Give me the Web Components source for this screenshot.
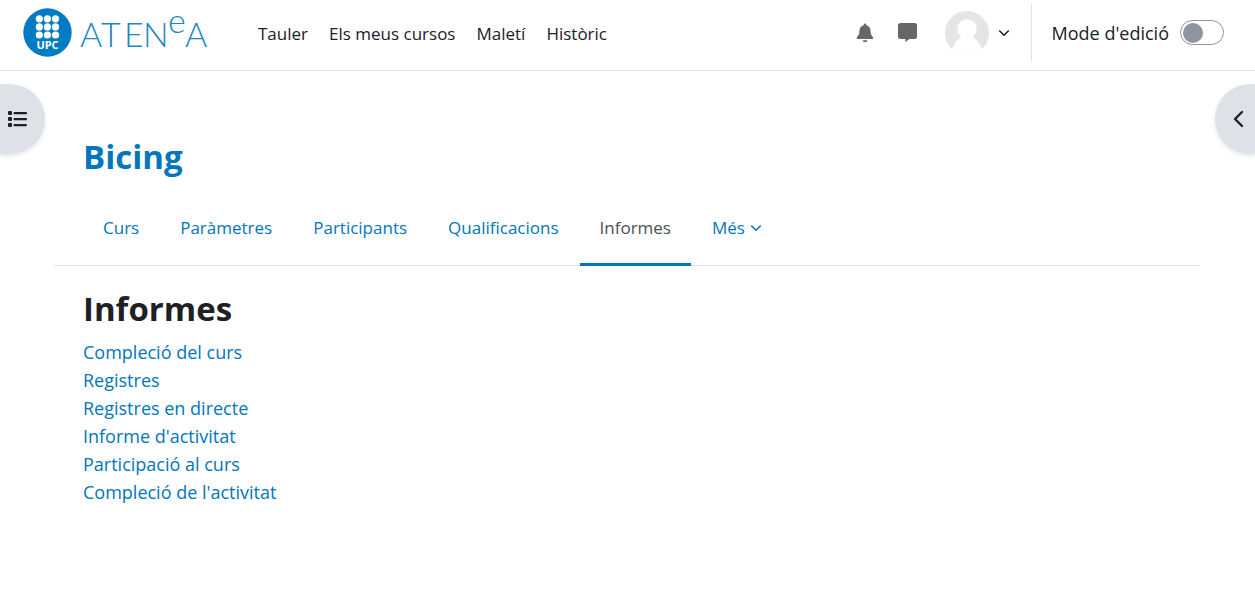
<!DOCTYPE html>
<html lang="ca">
<head>
<meta charset="utf-8">
<meta name="viewport" content="width=device-width, initial-scale=1">
<title>Bicing: Informes</title>
<style>
body { margin: 0; background: #fff; color: #1d2125; font: 18px/28px "Open Sans", "Noto Sans", sans-serif; --link: #0076bd; --line: #dee2e6; --nav-size: 17px; --title-size: 33px; }
</style>
</head>
<body>
<site-header>
  <site-logo slot="brand"></site-logo>
  <nav-link href="#tauler">Tauler</nav-link>
  <nav-link href="#cursos">Els meus cursos</nav-link>
  <nav-link href="#maleti">Maletí</nav-link>
  <nav-link href="#historic">Històric</nav-link>
  <user-tools slot="tools"></user-tools>
  <edit-switch slot="tools">Mode d'edició</edit-switch>
</site-header>
<drawer-toggle side="left" label="Obre l'índex del curs"></drawer-toggle>
<drawer-toggle side="right" label="Obre el calaix de blocs"></drawer-toggle>
<course-page heading="Bicing">
  <course-tab slot="tabs" href="#curs">Curs</course-tab>
  <course-tab slot="tabs" href="#parametres">Paràmetres</course-tab>
  <course-tab slot="tabs" href="#participants">Participants</course-tab>
  <course-tab slot="tabs" href="#qualificacions">Qualificacions</course-tab>
  <course-tab slot="tabs" href="#informes" active>Informes</course-tab>
  <course-tab slot="tabs" href="#mes" menu>Més</course-tab>
  <report-list heading="Informes">
    <report-link href="#complecio">Compleció del curs</report-link>
    <report-link href="#registres">Registres</report-link>
    <report-link href="#directe">Registres en directe</report-link>
    <report-link href="#activitat">Informe d'activitat</report-link>
    <report-link href="#participacio">Participació al curs</report-link>
    <report-link href="#complecio-activitat">Compleció de l'activitat</report-link>
  </report-list>
</course-page>
<script>
const define = (name, render) => customElements.define(name, class extends HTMLElement {
  constructor() {
    super();
    const t = document.createElement('template');
    t.innerHTML = render(this);
    this.attachShadow({ mode: 'open' }).append(t.content.cloneNode(true));
  }
});
const attr = (el, name) => el.getAttribute(name) || '';
const chevron = '<svg width="12" height="12" viewBox="0 0 12 12" aria-hidden="true"><path d="M1.7 4 6 8.2 10.3 4" fill="none" stroke="currentColor" stroke-width="1.6" stroke-linecap="round" stroke-linejoin="round"/></svg>';

define('site-header', () => `
<style>
  :host { display: block; border-bottom: 1px solid var(--line); background: #fff; }
  header { display: flex; align-items: center; height: 70px; padding: 0 31px 0 23px; box-sizing: border-box; }
  nav { display: flex; gap: 21px; margin: 0 auto 3px 51px; font-size: var(--nav-size); }
  .tools { display: flex; align-items: center; height: 70px; }
</style>
<header><slot name="brand"></slot><nav aria-label="Navegació del lloc"><slot></slot></nav><div class="tools"><slot name="tools"></slot></div></header>`);

define('site-logo', () => {
  let dots = '';
  for (const y of [10.8, 18.9, 27]) for (const x of [16.3, 24.4, 32.5]) dots += `<circle cx="${x}" cy="${y}" r="3.6"/>`;
  return `
<style>
  :host { display: block; margin-bottom: 6px; }
  a { display: flex; align-items: center; width: 184px; height: 49px; color: #1b87c9; text-decoration: none; }
  svg { display: block; overflow: visible; }
</style>
<a href="#inici" aria-label="Atenea UPC"><svg width="184" height="49" viewBox="0 0 184 49">
  <circle cx="24.5" cy="24.5" r="24.2" fill="#007bc4"/>
  <g fill="#fff">${dots}</g>
  <text x="24.5" y="41" text-anchor="middle" fill="#fff" font-family="Open Sans, sans-serif" font-size="11" font-weight="700">UPC</text>
  <g fill="currentColor" font-family="Lato, sans-serif" font-weight="300">
    <text x="57" y="39" font-size="34">A</text><text x="78" y="39" font-size="34">T</text><text x="101" y="39" font-size="34">E</text><text x="120" y="39" font-size="34">N</text>
    <text x="145" y="25" font-size="34">e</text><text x="162" y="39" font-size="34">A</text>
  </g>
</svg></a>`;
});

define('nav-link', el => `
<style>
  :host { display: block; }
  a { color: inherit; text-decoration: none; white-space: nowrap; }
</style><a href="${attr(el, 'href')}"><slot></slot></a>`);

define('user-tools', () => `
<style>
  :host { display: flex; align-items: center; margin-bottom: 5px; }
  button { display: flex; align-items: center; padding: 0; border: 0; background: none; color: #666; cursor: pointer; }
  .chat { margin: 0 28px 0 24px; }
  .user { gap: 9px; color: #1d2125; margin-right: 21px; }
  svg { display: block; }
</style>
<button type="button" aria-label="Notificacions"><svg width="18" height="20" viewBox="0 0 18 20" fill="currentColor"><path d="M9 .5c.7 0 1.200.5 1.200 1.200v.6c2.700.6 4.400 2.900 4.400 5.700 0 3.400 1 4.700 2.400 6.200.7.7.3 1.800-.7 1.800H1.700C.7 16 .3 14.900 1 14.200c1.400-1.500 2.400-2.800 2.400-6.200 0-2.800 1.700-5.100 4.400-5.700v-.6C7.800 1 8.300.5 9 .5zM6.600 17.300h4.800C11.200 18.500 10.200 19.300 9 19.300s-2.200-.8-2.400-2z"/></svg></button>
<button type="button" class="chat" aria-label="Missatges"><svg width="19" height="19" viewBox="0 0 19 19" fill="currentColor"><path d="M2.500 0h14A2.500 2.500 0 0 1 19 2.500v11a2.500 2.500 0 0 1-2.500 2.500h-5L7.300 19v-3H2.500A2.500 2.500 0 0 1 0 13.500v-11A2.500 2.500 0 0 1 2.500 0z"/></svg></button>
<button type="button" class="user" aria-label="Menú de l'usuari"><svg width="44" height="44" viewBox="0 0 44 44"><defs><clipPath id="c"><circle cx="22" cy="22" r="22"/></clipPath></defs><g clip-path="url(#c)"><path fill="#e5e5e5" d="M0 0h44v44H0z"/><circle cx="22" cy="18" r="9.800" fill="#fff"/><path d="M5 44c2-9 6-14 11-18h12c5 4 9 9 11 18z" fill="#fff"/></g></svg>${chevron}</button>`);

define('edit-switch', () => `
<style>
  :host { display: block; margin-bottom: 5px; border-left: 1px solid var(--line); padding-left: 20px; }
  label { display: flex; align-items: center; gap: 11px; height: 57px; white-space: nowrap; }
  input { appearance: none; box-sizing: border-box; width: 44px; height: 25px; margin: 0; padding: 2px; border: 1px solid #8f959e; border-radius: 13px; background: #fff; display: flex; align-items: center; }
  input::before { content: ""; width: 20px; height: 20px; border-radius: 50%; background: #8f959e; }
  input:checked { justify-content: flex-end; }
</style>
<label><span><slot></slot></span><input type="checkbox" role="switch"></label>`);

define('drawer-toggle', el => {
  const left = attr(el, 'side') === 'left';
  return `
<style>
  :host { position: fixed; top: 84px; ${left ? 'left' : 'right'}: 0; z-index: 2; }
  button { display: flex; align-items: center; width: ${left ? 45 : 40}px; height: 70px; padding: 0 ${left ? 8 : 11}px; justify-content: ${left ? 'flex-start' : 'flex-end'}; border: 0; background: #dee2e6; color: #1d2125; border-radius: ${left ? '0 35px 35px 0' : '35px 0 0 35px'}; box-shadow: 0 2px 4px rgba(0,0,0,.1); cursor: pointer; }
</style>
<button type="button" aria-label="${attr(el, 'label')}">${left
  ? '<svg width="19" height="16" viewBox="0 0 19 16" fill="currentColor"><rect width="4" height="4" rx="1"/><rect y="6" width="4" height="4" rx="1"/><rect y="12" width="4" height="4" rx="1"/><rect x="5.500" y="1" width="13.500" height="2.200" rx="1"/><rect x="5.500" y="7" width="13.500" height="2.200" rx="1"/><rect x="5.500" y="13" width="13.500" height="2.200" rx="1"/></svg>'
  : '<svg width="12" height="18" viewBox="0 0 12 18"><path d="M10 2 3 9l7 7" fill="none" stroke="currentColor" stroke-width="2.400" stroke-linecap="round" stroke-linejoin="round"/></svg>'}</button>`;
});

define('course-page', el => `
<style>
  :host { display: block; margin: 61px 56px 0 54px; }
  h1 { margin: 0; padding: 0 29px; font-size: var(--title-size); line-height: 50px; color: var(--link); }
  nav { display: flex; gap: 1px; height: 76px; margin-top: 7px; padding: 0 29px; border-bottom: 1px solid var(--line); font-size: var(--nav-size); }
  main { padding: 18px 29px; }
</style>
<h1>${attr(el, 'heading')}</h1>
<nav aria-label="Navegació del curs"><slot name="tabs"></slot></nav>
<main><slot></slot></main>`);

define('course-tab', el => {
  const on = el.hasAttribute('active');
  return `
<style>
  :host { display: block; height: 77px; }
  a { display: flex; align-items: center; gap: 5px; box-sizing: border-box; height: 77px; padding: 3px 20px 0; border-bottom: 3px solid ${on ? 'var(--link)' : 'transparent'}; color: ${on ? '#495057' : 'var(--link)'}; text-decoration: none; white-space: nowrap; }
</style>
<a href="${attr(el, 'href')}"${on ? ' aria-current="page"' : ''}><slot></slot>${el.hasAttribute('menu') ? chevron : ''}</a>`;
});

define('report-list', el => `
<style>
  :host { display: block; }
  h2 { margin: 0 0 4px; font-size: var(--title-size); line-height: 50px; }
</style>
<h2>${attr(el, 'heading')}</h2><slot></slot>`);

define('report-link', el => `
<style>
  :host { display: block; }
  a { color: var(--link); text-decoration: none; }
</style><a href="${attr(el, 'href')}"><slot></slot></a>`);
</script>
</body>
</html>
